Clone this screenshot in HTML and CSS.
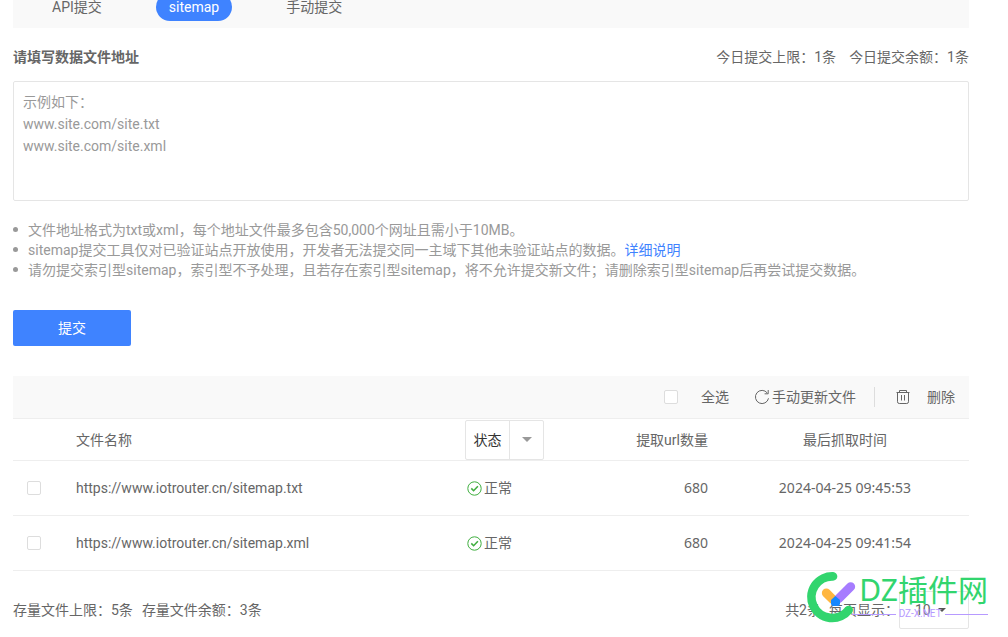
FILE: index.html
```html
<!DOCTYPE html>
<html lang="zh-CN">
<head>
<meta charset="utf-8">
<title>sitemap提交</title>
<link rel="stylesheet" href="styles.css">
</head>
<body>
<main class="page">
  <nav class="tabs">
    <button class="tab" type="button">API提交</button>
    <button class="tab tab-active" type="button">sitemap</button>
    <button class="tab" type="button">手动提交</button>
  </nav>

  <form class="submit-form">
    <div class="form-head">
      <label class="form-title" for="urls">请填写数据文件地址</label>
      <div class="quota"><span>今日提交上限：1条</span><span>今日提交余额：1条</span></div>
    </div>
    <textarea class="urls" id="urls" placeholder="示例如下：&#10;www.site.com/site.txt&#10;www.site.com/site.xml"></textarea>
    <ul class="tips">
      <li>文件地址格式为txt或xml，每个地址文件最多包含50,000个网址且需小于10MB。</li>
      <li>sitemap提交工具仅对已验证站点开放使用，开发者无法提交同一主域下其他未验证站点的数据。<a class="link" href="#">详细说明</a></li>
      <li>请勿提交索引型sitemap，索引型不予处理，且若存在索引型sitemap，将不允许提交新文件；请删除索引型sitemap后再尝试提交数据。</li>
    </ul>
    <button class="submit" type="button">提交</button>
  </form>

  <section class="files">
    <div class="toolbar">
      <label class="select-all"><input class="check" type="checkbox">全选</label>
      <button class="tool refresh" type="button">
        <svg width="16" height="16" viewBox="0 0 16 16" fill="none" stroke="#666"><path d="M13.3 4A6.6 6.6 0 1 0 14.5 9.3"/><path d="M14.2 1v3.8h-3.6"/></svg>手动更新文件</button>
      <button class="tool remove" type="button">
        <svg width="14" height="16" viewBox="0 0 14 16" fill="none" stroke="#666"><path d="M.5 3.5h13M3.5 3.5v-2h7v2M1.500 3.500v9.200q0 1.800 1.800 1.800h7.400q1.800 0 1.800-1.800V3.500M5.500 6v5.500M8.500 6v5.500"/></svg>删除</button>
    </div>
    <table class="table">
      <colgroup><col class="col-check"><col><col class="col-status"><col class="col-count"><col class="col-time"></colgroup>
      <thead>
        <tr>
          <th></th>
          <th>文件名称</th>
          <th><button class="filter" type="button"><span class="filter-label">状态</span><span class="filter-arrow"><svg width="10" height="5" viewBox="0 0 10 5" fill="#999"><path d="M0 0h10L5 5z"/></svg></span></button></th>
          <th class="count">提取url数量</th>
          <th class="time">最后抓取时间</th>
        </tr>
      </thead>
      <tbody>
        <tr>
          <td class="pick"><input class="check" type="checkbox" aria-label="sitemap.txt"></td>
          <td>https://www.iotrouter.cn/sitemap.txt</td>
          <td><span class="status"><svg width="15" height="15" viewBox="0 0 15 15" fill="none" stroke="#3fae3f"><circle cx="7.500" cy="7.500" r="6.700"/><path stroke-width="1.600" d="M4.300 7.400l2.300 2.300 4.300-4.400"/></svg>正常</span></td>
          <td class="count">680</td>
          <td class="time">2024-04-25 09:45:53</td>
        </tr>
        <tr>
          <td class="pick"><input class="check" type="checkbox" aria-label="sitemap.xml"></td>
          <td>https://www.iotrouter.cn/sitemap.xml</td>
          <td><span class="status"><svg width="15" height="15" viewBox="0 0 15 15" fill="none" stroke="#3fae3f"><circle cx="7.500" cy="7.500" r="6.700"/><path stroke-width="1.600" d="M4.300 7.400l2.300 2.300 4.300-4.400"/></svg>正常</span></td>
          <td class="count">680</td>
          <td class="time">2024-04-25 09:41:54</td>
        </tr>
      </tbody>
    </table>
  </section>

  <footer class="foot">
    <div class="stock"><span>存量文件上限：5条</span><span>存量文件余额：3条</span></div>
    <div class="pager">
      <span>共2条</span>
      <label for="size">每页显示：</label>
      <span class="size-box">
        <select class="size" id="size"><option>10</option></select>
        <svg class="size-arrow" width="8" height="4" viewBox="0 0 8 4" fill="#555"><path d="M0 0h8L4 4z"/></svg>
      </span>
    </div>
    <div class="mark">
      <svg class="mark-logo" width="52" height="54" viewBox="108 30 156 162" fill="none" stroke-linecap="round">
        <path stroke="#32d56e" stroke-width="26" d="M189 49A62.500 62.500 0 1 0 236 150"/>
        <path stroke="#ffb640" stroke-width="27" d="M169 99l20 20"/>
        <path stroke="#a67cff" stroke-width="27" d="M242 80l-36 36"/>
        <path fill="#1687ff" d="M196 108l14 12v11q0 7-7 7h-13q-7 0-7-7v-11z"/>
      </svg>
      <div class="mark-text">
        <span class="mark-name">DZ插件网</span>
        <span class="mark-site">DZ-X.NET</span>
      </div>
    </div>
  </footer>
</main>
</body>
</html>
```
FILE: styles.css
```css
* { box-sizing: border-box; }

body {
  margin: 0;
  background: #fff;
  color: #666;
  font: 14px/20px Roboto, "Noto Sans CJK SC", sans-serif;
}

button, select, textarea { font: inherit; color: inherit; }
button { padding: 0; border: 0; background: none; cursor: pointer; }
svg { display: block; flex: none; }

.page { padding: 0 39px 0 13px; }

.tabs {
  display: flex;
  align-items: flex-end;
  gap: 41px;
  height: 28px;
  padding: 0 26px 7px;
  background: #f9f9f9;
}
.tab { flex: none; height: 28px; padding: 0 13px; border-radius: 14px; }
.tab-active { background: #3f83ff; color: #fff; }

.form-head {
  display: flex;
  justify-content: space-between;
  align-items: center;
  padding: 19px 0 14px;
}
.form-title { font-weight: 700; }
.quota { display: flex; gap: 13px; }

.urls {
  display: block;
  width: 100%;
  height: 120px;
  padding: 9px;
  border: 1px solid #e5e5e5;
  border-radius: 2px;
  line-height: 22px;
  resize: none;
}
.urls::placeholder { color: #999; opacity: 1; }

.tips {
  margin: 19px 0 30px;
  padding-left: 14px;
  color: #999;
  list-style: none;
}
.tips li::before {
  content: "";
  display: inline-block;
  width: 5px;
  height: 5px;
  margin: 0 10px 0 -15px;
  border-radius: 50%;
  background: #999;
  vertical-align: 3px;
}
.tips li { padding-left: 1px; }
.link { color: #3f83ff; text-decoration: none; }

.submit {
  width: 118px;
  height: 36px;
  border-radius: 2px;
  background: #3f83ff;
  color: #fff;
}

.toolbar {
  display: flex;
  justify-content: flex-end;
  align-items: center;
  height: 43px;
  margin-top: 30px;
  padding-right: 14px;
  border-bottom: 1px solid #eee;
  background: #f9f9f9;
}
.check {
  appearance: none;
  display: block;
  width: 14px;
  height: 14px;
  margin: 0;
  border: 1px solid #ddd;
  border-radius: 2px;
  background: #fff;
}
.select-all { display: flex; align-items: center; gap: 23px; }
.tool { display: flex; align-items: center; }
.refresh { gap: 2px; margin: 0 18px 0 25px; }
.remove { gap: 17px; padding-left: 21px; border-left: 1px solid #ddd; }

.table { width: 100%; border-collapse: separate; border-spacing: 0; table-layout: fixed; }
.col-check { width: 63px; }
.col-status { width: 135px; }
.col-count { width: 108px; }
.col-time { width: 261px; }
.table th, .table td {
  padding: 0;
  border-bottom: 1px solid #eee;
  font-weight: 400;
  text-align: left;
}
.table th { height: 42px; }
.table td { height: 55px; }
.table .pick { padding-left: 14px; }
.table .count { text-align: right; }
.table .time { padding-left: 13px; text-align: center; }
.table td.count, .table td.time { font-family: "Noto Sans", sans-serif; }

.filter {
  display: flex;
  height: 40px;
  border: 1px solid #e5e5e5;
  border-radius: 2px;
  color: #333;
}
.filter-label, .filter-arrow { display: flex; align-items: center; justify-content: center; height: 100%; }
.filter-label { width: 44px; border-right: 1px solid #e5e5e5; }
.filter-arrow { width: 33px; }

.status { display: flex; align-items: center; gap: 2px; padding-left: 2px; }

.foot {
  position: relative;
  display: flex;
  justify-content: space-between;
  align-items: center;
  padding: 20px 0 8px;
}
.stock { display: flex; gap: 9px; }
.pager { display: flex; align-items: center; }
.pager > label { margin-left: 8px; }
.size-box { position: relative; }
.size {
  appearance: none;
  display: block;
  width: 70px;
  height: 38px;
  padding: 0 15px;
  border: 1px solid #e5e5e5;
  border-radius: 2px;
  background: #fff;
}
.size-arrow { position: absolute; top: 17px; right: 23px; }

/* Site mark laid over the pager */
.mark {
  position: absolute;
  top: -1px;
  right: -19px;
  display: flex;
  pointer-events: none;
}
.mark-text { display: flex; flex-direction: column; margin-left: 1px; }
.mark-name { color: #32d56e; font: 30px/40px "Noto Sans", "Noto Sans CJK SC", sans-serif; }
.mark-site {
  display: flex;
  align-items: center;
  gap: 3px;
  margin-left: -7px;
  color: #b79aff;
  font-size: 10px;
  line-height: 8px;
}
.mark-site::before, .mark-site::after { content: ""; flex: 1; height: 1px; background: #b79aff; }
```
